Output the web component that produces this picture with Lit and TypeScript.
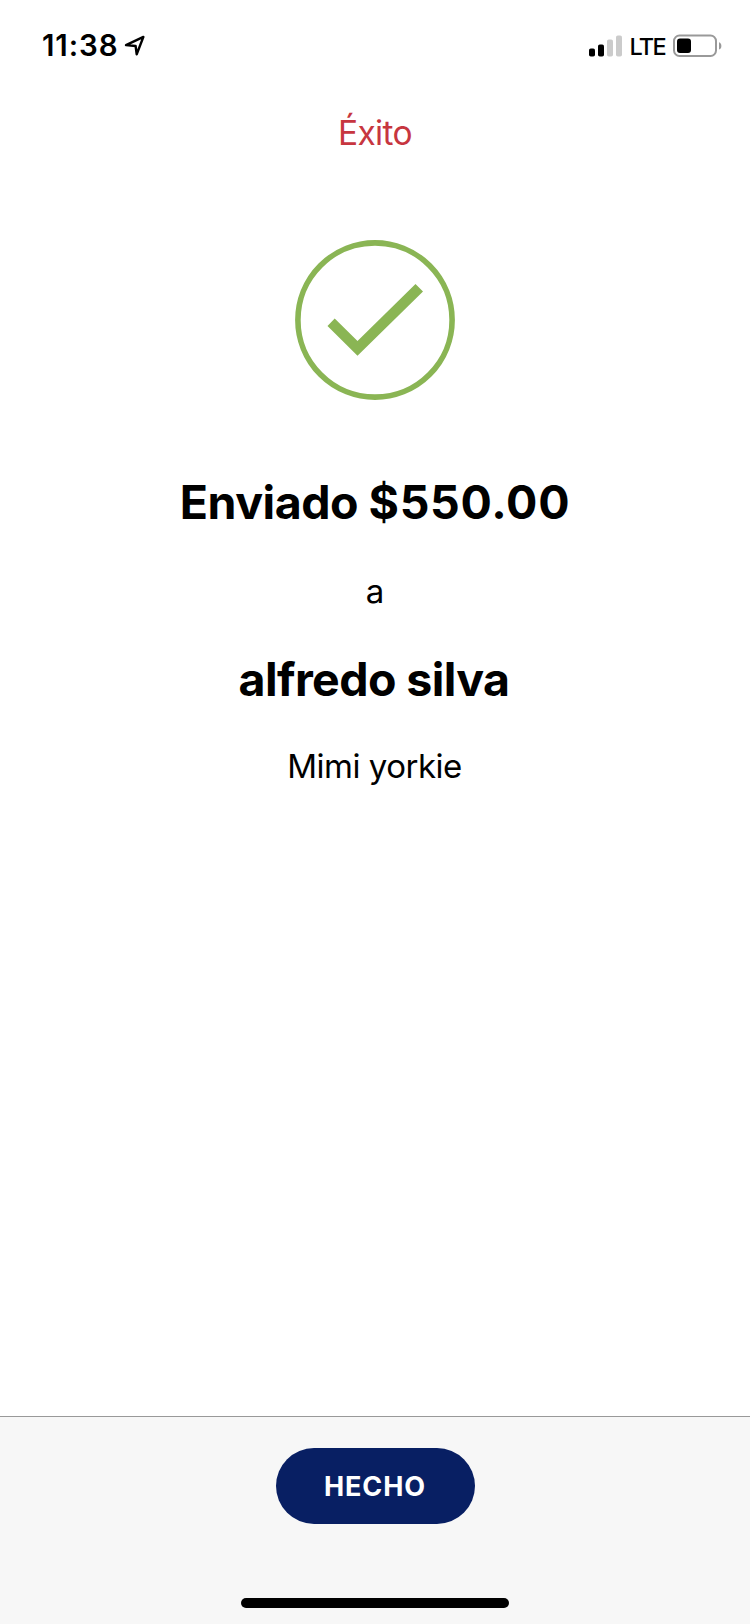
import { LitElement, html, css } from "lit";
import { customElement, property } from "lit/decorators.js";

@customElement("status-bar")
class StatusBar extends LitElement {
  @property() time = "11:38";
  @property() network = "LTE";

  static styles = css`
    :host { display: flex; justify-content: space-between; align-items: flex-start; height: 90px; padding: 25px 28px 0 42px; box-sizing: border-box; }
    .side { display: flex; height: 41px; align-items: center; }
    .time { font-size: 29.5px; font-weight: 600; line-height: 41px; letter-spacing: 0.9px; width: 82px; white-space: nowrap; }
    .network { font-size: 23.5px; font-weight: 500; line-height: 41px; padding: 2px 0 0 0.5px; width: 43.5px; letter-spacing: -1.7px; }
    svg { display: block; }
  `;

  render() {
    return html`
      <div class="side">
        <span class="time">${this.time}</span>
        <svg width="24" height="24" viewBox="0 0 24 24">
          <path d="M2 11.100 L19.400 2.900 L12.700 20.300 L11.600 12 Z" fill="none" stroke="#000" stroke-width="2.4" stroke-linejoin="round" />
        </svg>
      </div>
      <div class="side">
        <svg width="41" height="24" viewBox="0 0 41 24">
          <rect x="1" y="14.500" width="6" height="8" rx="1.8" />
          <rect x="10" y="10.500" width="6" height="12" rx="1.8" />
          <rect x="19" y="5.500" width="6" height="17" rx="1.8" fill="#cbcbcb" />
          <rect x="28" y="1.500" width="6" height="21" rx="1.8" fill="#cbcbcb" />
        </svg>
        <span class="network">${this.network}</span>
        <svg width="49" height="24" viewBox="0 0 49 24">
          <rect x="1" y="1.500" width="42" height="20.500" rx="5.500" fill="none" stroke="#999" stroke-width="2" />
          <rect x="4" y="4.500" width="14" height="14.500" rx="3" />
          <path d="M46 8.200 C49.200 9.300 49.200 14.500 46 15.600 Z" fill="#999" />
        </svg>
      </div>
    `;
  }
}

@customElement("app-root")
class AppRoot extends LitElement {
  static styles = css`
    :host { display: flex; flex-direction: column; height: 1624px; background: #fff; color: #000; font-family: Inter, "Liberation Sans", sans-serif; }
    .title { margin: 0; height: 84px; line-height: 86px; text-align: center; font-size: 33.5px; font-weight: 400; color: #c7363f; letter-spacing: -0.65px; }
    main { flex: 1; display: flex; flex-direction: column; align-items: center; padding-top: 66px; text-align: center; }
    .check { display: block; width: 160px; height: 160px; }
    .strong { margin: 0; font-size: 46.5px; font-weight: 700; line-height: 60px; white-space: nowrap; }
    .amount { margin-top: 72px; letter-spacing: -0.5px; }
    .sum { letter-spacing: 0.7px; }
    .name { letter-spacing: -0.6px; padding-right: 2px; }
    .text { margin: 0; font-size: 33px; line-height: 40px; }
    .to { margin: 39px 0 38px; }
    .note { margin-top: 37px; letter-spacing: -0.5px; padding-right: 1px; }
    footer { height: 208px; box-sizing: border-box; border-top: 1px solid #999; background: #f7f7f7; display: flex; flex-direction: column; align-items: center; justify-content: space-between; padding: 31px 0 16px; }
    button { width: 199px; height: 76px; padding: 1px 0 0; border: 0; border-radius: 38px; background: #081f63; color: #fff; font: 650 27px/75px Inter, sans-serif; letter-spacing: 0.9px; }
    .home { width: 268px; height: 10px; border-radius: 5px; background: #000; }
  `;

  render() {
    return html`
      <status-bar></status-bar>
      <h1 class="title">Éxito</h1>
      <main>
        <svg class="check" viewBox="0 0 160 160">
          <circle cx="80" cy="80" r="77.100" fill="none" stroke="#8ab554" stroke-width="5.600" />
          <path d="M32.500 86 L39.700 78.500 L62.500 101 L120.500 44 L128 51.500 L62.500 115.700 Z" fill="#8ab554" />
        </svg>
        <h2 class="strong amount">Enviado <span class="sum">$550.00</span></h2>
        <p class="text to">a</p>
        <h2 class="strong name">alfredo silva</h2>
        <p class="text note">Mimi yorkie</p>
      </main>
      <footer>
        <button type="button">HECHO</button>
        <div class="home"></div>
      </footer>
    `;
  }
}
